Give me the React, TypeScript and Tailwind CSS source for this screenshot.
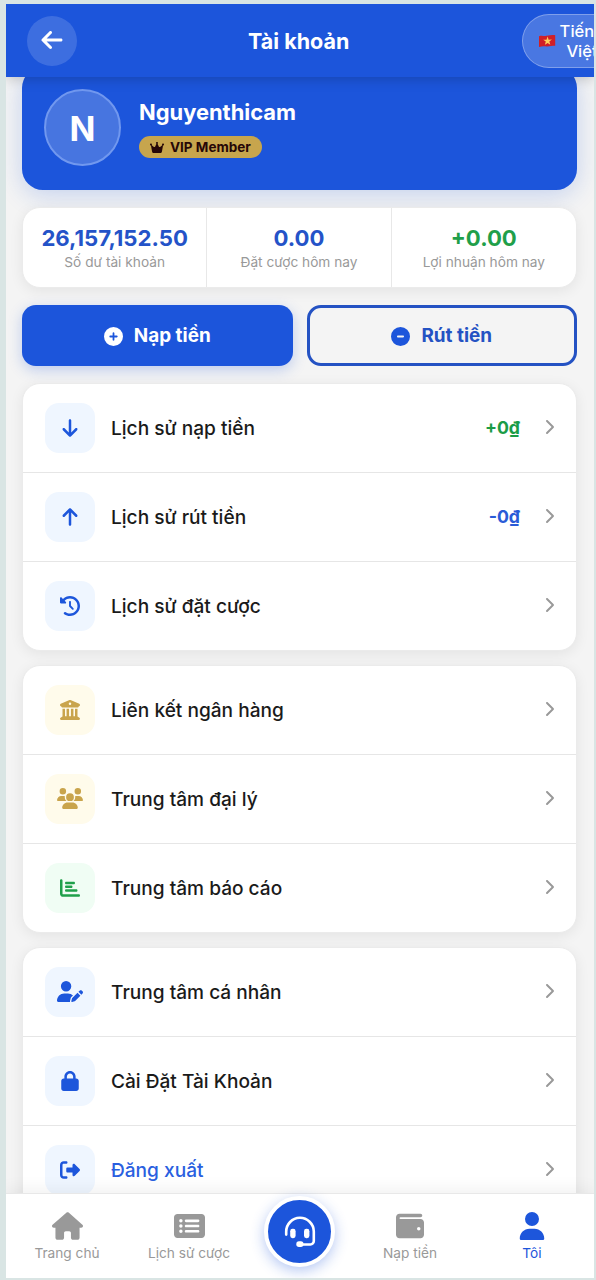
import type { ReactNode } from 'react';
import {
  FaArrowDown, FaArrowLeft, FaArrowUp, FaBuildingColumns, FaChartBar, FaChevronRight,
  FaCircleMinus, FaCirclePlus, FaClockRotateLeft, FaCrown, FaHouse, FaLock,
  FaRectangleList, FaRightFromBracket, FaUser, FaUserPen, FaUsers, FaWallet,
} from 'react-icons/fa6';

type Row = { icon: ReactNode; tint: string; label: string; labelColor?: string; value?: string; valueColor?: string };

const BLUE = 'bg-[#eff6ff] text-[#1d56db]';
const GOLD = 'bg-[#fffbeb] text-[#c9a44c]';
const GREEN = 'bg-[#f0fdf4] text-[#1fa04a]';

const groups: Row[][] = [
  [
    { icon: <FaArrowDown />, tint: BLUE, label: 'Lịch sử nạp tiền', value: '+0₫', valueColor: 'text-[#1b9c47]' },
    { icon: <FaArrowUp />, tint: BLUE, label: 'Lịch sử rút tiền', value: '-0₫', valueColor: 'text-[#2a5bd7]' },
    { icon: <FaClockRotateLeft />, tint: BLUE, label: 'Lịch sử đặt cược' },
  ],
  [
    { icon: <FaBuildingColumns />, tint: GOLD, label: 'Liên kết ngân hàng' },
    { icon: <FaUsers className="h-[21px] w-[26px]" />, tint: GOLD, label: 'Trung tâm đại lý' },
    { icon: <FaChartBar />, tint: GREEN, label: 'Trung tâm báo cáo' },
  ],
  [
    { icon: <FaUserPen className="h-[21px] w-[26px]" />, tint: BLUE, label: 'Trung tâm cá nhân' },
    { icon: <FaLock />, tint: BLUE, label: 'Cài Đặt Tài Khoản' },
    { icon: <FaRightFromBracket />, tint: BLUE, label: 'Đăng xuất', labelColor: 'text-[#2a5fe0]' },
  ],
];

function VietnamFlag() {
  return (
    <svg viewBox="0 0 18 14" className="h-[14px] w-[18px] shrink-0">
      <path d="M1 2.200C4 1 6 2.400 9 1.800S14.500.8 17.200 1.200V11.800C14 11.800 12 12.400 9 12.400S4 12 1 13Z" fill="#d01f26" />
      <path d="m9.600 2.600 1 3.100 3.300-.1-2.600 2 1 3.100-2.700-1.800-2.700 1.900.9-3.200-2.600-1.800 3.300-.1Z" fill="#ffd05a" />
    </svg>
  );
}

function Headset() {
  return (
    <svg viewBox="0 0 32 32" className="size-8 shrink-0" fill="none" stroke="white" strokeWidth="2.600" strokeLinecap="round">
      <path d="M2.200 18.600V15.800a13.600 13.600 0 0 1 27.600-.4V25a3.400 3.400 0 0 1-3.400 3.500H17" />
      <rect x="6.200" y="12.800" width="5.400" height="9.400" rx="2.400" fill="white" stroke="none" />
      <rect x="20" y="12.800" width="5.400" height="9.400" rx="2.400" fill="white" stroke="none" />
      <rect x="12.300" y="25.300" width="7.200" height="5.600" rx="2.700" fill="white" stroke="none" />
    </svg>
  );
}

function Stat({ value, label, color }: { value: string; label: string; color: string }) {
  return (
    <div className="flex flex-1 flex-col items-center pt-[17px]">
      <span className={`text-[22.200px] leading-[26px] font-bold ${color}`}>{value}</span>
      <span className="mt-[1px] text-[13.700px] leading-[20px] whitespace-nowrap text-[#999999]">{label}</span>
    </div>
  );
}

function MenuRow({ row }: { row: Row }) {
  return (
    <div className="flex h-[89px] items-center border-b border-[#e6e6e6] pr-[22px] pl-[22px] last:h-[88px] last:border-b-0">
      <div className={`flex size-[50px] shrink-0 items-center justify-center rounded-[14px] pb-px text-[20px] ${row.tint}`}>{row.icon}</div>
      <span className={`ml-4 flex-1 text-[19.100px] leading-[28px] font-medium ${row.labelColor ?? 'text-[#1a1a1a]'}`}>{row.label}</span>
      {row.value && <span className={`mr-[21px] text-[17.700px] font-bold ${row.valueColor}`}>{row.value}</span>}
      <FaChevronRight className="mb-[2px] mr-[-3px] text-[16px] text-[#999999]" />
    </div>
  );
}

function Tab({ icon, label, active }: { icon: ReactNode; label: string; active?: boolean }) {
  return (
    <div className={`flex w-[122px] flex-col items-center pt-[16px] ${active ? 'text-[#1d56db]' : 'text-[#999999]'}`}>
      <div className="flex h-[32px] items-center justify-center text-[28px]">{icon}</div>
      <span className="mt-[2px] text-[13.700px] leading-[18px]">{label}</span>
    </div>
  );
}

export default function App() {
  return (
    <div className="h-[1280px] w-[596px] overflow-hidden bg-[#d9e5e4] pt-1 pr-[2px] pb-[2px] pl-[6px] font-['Inter',sans-serif]">
      <div className="flex h-[1274px] w-[588px] flex-col overflow-hidden bg-[#f4f4f4]">
        <header className="z-10 flex h-[73px] shrink-0 items-center bg-[#1c55db] pl-[21px] shadow-[0_2px_12px_rgba(0,0,0,0.2)]">
          <div className="flex size-[50px] shrink-0 items-center justify-center rounded-full bg-white/15 pb-px text-[24px] text-white">
            <FaArrowLeft />
          </div>
          <h1 className="ml-[171px] w-[104px] shrink-0 pt-[2px] text-[21.500px] font-bold whitespace-nowrap text-white">Tài khoản</h1>
          <div className="ml-[170px] flex h-[54px] w-[100px] shrink-0 items-center rounded-full border-[1.500px] border-white/30 bg-white/20 pl-[15px] text-white">
            <VietnamFlag />
            <span className="ml-[2px] w-[48px] text-center text-[16.500px] leading-[20px] font-medium">Tiếng Việt</span>
          </div>
        </header>

        <main className="min-h-0 flex-1 overflow-hidden pr-[17px] pl-4">
          <section className="mt-[-10px] flex h-[123px] rounded-[21px] bg-[#1c55db] pt-[22px] pl-[22px] shadow-[0_5px_24px_rgba(28,85,219,0.22)]">
            <div className="flex size-[77px] items-center justify-center rounded-full border-2 border-[#7198ef] bg-[#4775e0] pt-[2px] text-[34px] font-bold text-white">N</div>
            <div className="ml-[18px] flex flex-col items-start pt-[9px]">
              <span className="text-[21.900px] leading-[28px] font-bold text-white">Nguyenthicam</span>
              <span className="mt-[10px] flex h-[22px] items-center gap-[6px] rounded-full bg-[#c7a54d] px-[11px] text-[13.500px] font-bold text-[#260707]">
                <FaCrown className="h-[13px] w-[14px]" />
                VIP Member
              </span>
            </div>
          </section>

          <section className="mt-[17px] grid h-[81px] grid-cols-3 divide-x divide-[#e8e8e8] rounded-[18px] border border-[#ebebeb] bg-white shadow-[0_3px_14px_rgba(0,0,0,0.07)]">
            <Stat value="26,157,152.50" label="Số dư tài khoản" color="text-[#2453c8]" />
            <Stat value="0.00" label="Đặt cược hôm nay" color="text-[#2453c8]" />
            <Stat value="+0.00" label="Lợi nhuận hôm nay" color="text-[#1f9f4a]" />
          </section>

          <div className="mt-[17px] grid h-[61px] grid-cols-2 gap-[14px] text-[18.900px] font-bold">
            <div className="flex items-center justify-center gap-[11px] rounded-[14px] bg-[#1c55db] pt-px text-white shadow-[0_4px_14px_rgba(28,85,219,0.25)]">
              <FaCirclePlus className="text-[19px]" />
              Nạp tiền
            </div>
            <div className="flex items-center justify-center gap-[11px] rounded-[14px] border-[3px] border-[#2452c3] pt-px text-[#2452c3]">
              <FaCircleMinus className="text-[19px] text-[#1c55db]" />
              Rút tiền
            </div>
          </div>

          <div className="mt-[17px] flex flex-col gap-[14px]">
            {groups.map((rows, i) => (
              <section key={i} className="overflow-hidden rounded-[18px] border border-[#ebebeb] bg-white shadow-[0_3px_14px_rgba(0,0,0,0.07)]">
                {rows.map((row) => <MenuRow key={row.label} row={row} />)}
              </section>
            ))}
          </div>
        </main>

        <nav className="z-10 flex h-[85px] shrink-0 border-t border-[#e8e8e8] bg-white shadow-[0_-4px_16px_rgba(0,0,0,0.06)]">
          <Tab icon={<FaHouse className="h-[28px] w-[31px]" />} label="Trang chủ" />
          <Tab icon={<FaRectangleList className="h-[28px] w-[31px]" />} label="Lịch sử cược" />
          <div className="flex w-[99px] justify-center">
            <div className="mt-[2px] flex size-[71px] items-center justify-center rounded-full border-4 border-white bg-[#1c55db] shadow-[0_4px_14px_rgba(28,85,219,0.32)]">
              <Headset />
            </div>
          </div>
          <Tab icon={<FaWallet />} label="Nạp tiền" />
          <Tab icon={<FaUser />} label="Tôi" active />
        </nav>
      </div>
    </div>
  );
}
